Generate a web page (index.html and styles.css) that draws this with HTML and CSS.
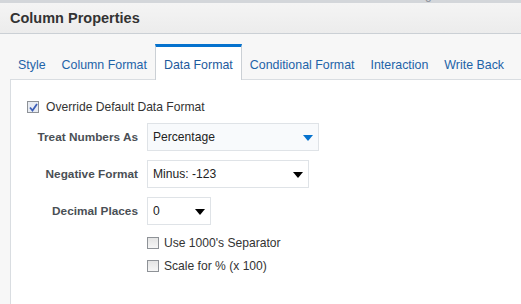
FILE: index.html
```html
<!DOCTYPE html>
<html lang="en">
<head>
    <meta charset="UTF-8">
    <title>Column Properties</title>
    <link rel="stylesheet" href="styles.css">
</head>
<body>
    <div class="top-strip">
        <span>Home</span><span>Catalog</span><span>Favorites</span>
    </div>

    <div class="dialog-header">Column Properties</div>

    <div class="tab-area">
        <div class="tabs">
            <div class="tab">Style</div>
            <div class="tab">Column Format</div>
            <div class="tab active">Data Format</div>
            <div class="tab">Conditional Format</div>
            <div class="tab">Interaction</div>
            <div class="tab">Write Back</div>
        </div>

        <div class="tab-body">
            <label class="check-row">
                <span class="checkbox checked">
                    <svg width="9" height="9" viewBox="0 0 9 9"><path d="M1 4.5 L3.5 7.5 L8 1" fill="none" stroke="#3d5fb8" stroke-width="1.8"/></svg>
                </span>
                Override Default Data Format
            </label>

            <div class="form-grid">
                <div class="field-label">Treat Numbers As</div>
                <div class="select wide blue">
                    <span>Percentage</span>
                    <span class="arrow"></span>
                </div>

                <div class="field-label">Negative Format</div>
                <div class="select medium">
                    <span>Minus: -123</span>
                    <span class="arrow"></span>
                </div>

                <div class="field-label">Decimal Places</div>
                <div class="select small">
                    <span>0</span>
                    <span class="arrow"></span>
                </div>

                <div></div>
                <div class="options">
                    <label class="check-row"><span class="checkbox"></span>Use 1000's Separator</label>
                    <label class="check-row"><span class="checkbox"></span>Scale for % (x 100)</label>
                </div>
            </div>
        </div>
    </div>
</body>
</html>
```

FILE: styles.css
```css
body {
    margin: 0;
    font-family: "Liberation Sans", Arial, sans-serif;
    font-size: 12.1px;
    color: #333;
    background: #f7f7f7;
    height: 304px;
    overflow: hidden;
}

.top-strip {
    height: 3px;
    overflow: hidden;
    background: #d3d6da;
    display: flex;
    justify-content: flex-end;
    gap: 40px;
    font-size: 12px;
    color: #8a8f99;
}

.top-strip span {
    line-height: 14px;
    margin-top: -12px;
}

.dialog-header {
    height: 30px;
    line-height: 30px;
    padding-left: 10px;
    font-size: 14.5px;
    font-weight: bold;
    color: #333;
    background: linear-gradient(#f4f4f4, #ececec);
    border-bottom: 1px solid #cbd0d5;
}

.tab-area {
    padding-top: 10px;
    padding-left: 10px;
}

.tabs {
    display: flex;
    border-bottom: 1px solid #d9dde1;
    height: 35px;
    font-size: 12.4px;
}

.tab {
    padding: 0 8px;
    line-height: 42px;
    color: #1e63a8;
    white-space: nowrap;
}

.tab.active {
    background: #fff;
    border: 1px solid #cbd0d5;
    border-top: 3px solid #0572ce;
    border-bottom: none;
    line-height: 36px;
    height: 33px;
    margin-bottom: -1px;
    color: #1e5a9c;
}

.tab-body {
    background: #fff;
    border-left: 1px solid #d9dde1;
    height: 210px;
    padding: 20px 0 0 16px;
}

.check-row {
    display: flex;
    align-items: center;
    gap: 7px;
    line-height: 14px;
    color: #333;
}

.checkbox {
    width: 10px;
    height: 10px;
    border: 1px solid #8e9297;
    background: linear-gradient(#e4e4e4, #f6f6f6);
    display: flex;
    align-items: center;
    justify-content: center;
}

.checkbox.checked {
    background: #e8ecf3;
}

.form-grid {
    display: grid;
    grid-template-columns: 111px auto;
    column-gap: 9px;
    row-gap: 9px;
    margin-top: 9px;
    align-items: center;
}

.field-label {
    text-align: right;
    font-weight: bold;
    font-size: 11.8px;
    color: #4a4f55;
}

.select {
    height: 26px;
    border: 1px solid #dfe3e7;
    background: #fff;
    display: flex;
    align-items: center;
    justify-content: space-between;
    padding: 0 5px 0 5px;
    color: #222;
}

.select.wide {
    width: 160px;
    background: #f8fafc;
}

.select.medium {
    width: 150px;
}

.select.small {
    width: 52px;
}

.arrow {
    width: 0;
    height: 0;
    border-left: 5px solid transparent;
    border-right: 5px solid transparent;
    border-top: 6px solid #000;
    margin-top: 2px;
}

.select.blue .arrow {
    border-top-color: #0572ce;
}

.options {
    display: flex;
    flex-direction: column;
    gap: 9px;
    margin-top: 2px;
}

.options .check-row {
    gap: 5px;
}
```
